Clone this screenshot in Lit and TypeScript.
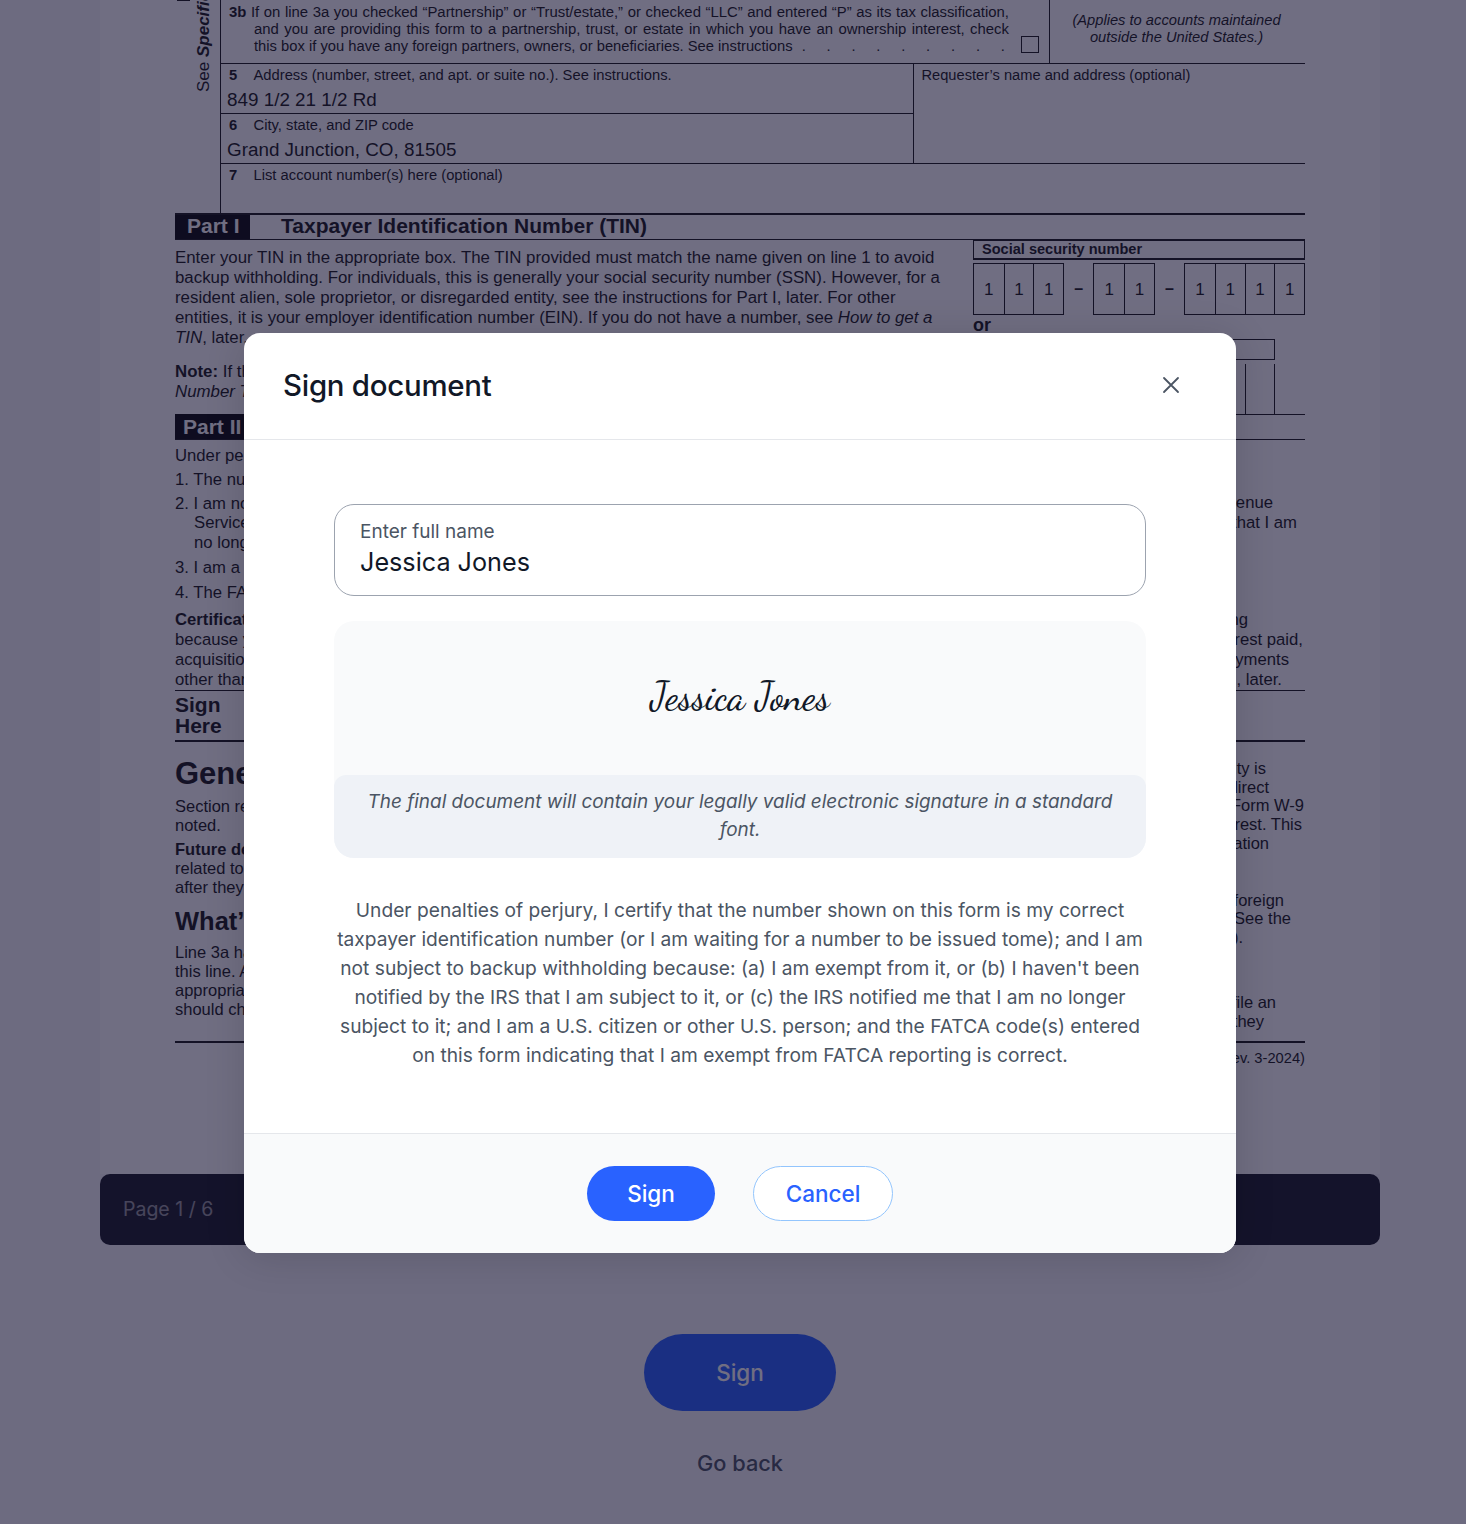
import { LitElement, html, css } from "lit";
import { customElement } from "lit/decorators.js";

type Row = { y: number; t?: unknown; k?: string; end?: number };

const certLeft: Row[] = [
  { y: 455, t: "Under penalties of" },
  { y: 479, t: "1. The number" },
  { y: 503, t: "2. I am not" },
  { y: 522, t: "Service", k: "ind" },
  { y: 542, t: "no longer", k: "ind" },
  { y: 567, t: "3. I am a U.S." },
  { y: 592, t: "4. The FATCA" },
  { y: 619, t: html`<b>Certification</b>` },
  { y: 639, t: "because you" },
  { y: 659, t: "acquisition or" },
  { y: 679, t: "other than" },
];
const certRight: Row[] = [
  { y: 502, t: "Revenue", end: 1273 },
  { y: 522, t: "that I am", end: 1297 },
  { y: 619, t: "withholding", end: 1248 },
  { y: 639, t: "interest paid,", end: 1303 },
  { y: 659, t: "payments", end: 1289 },
  { y: 679, t: "Part II, later.", end: 1282 },
];
const lowerLeft: Row[] = [
  { y: 774, t: "General", k: "h1" },
  { y: 806, t: "Section references" },
  { y: 825, t: "noted." },
  { y: 849, t: html`<b>Future developments</b>` },
  { y: 868, t: "related to Form" },
  { y: 887, t: "after they were" },
  { y: 921, t: "What’s New", k: "h2" },
  { y: 952, t: "Line 3a has" },
  { y: 971, t: "this line. An" },
  { y: 990, t: "appropriate" },
  { y: 1009, t: "should check" },
];
const lowerRight: Row[] = [
  { y: 768, t: "entity is", end: 1266 },
  { y: 787, t: "indirect", end: 1269 },
  { y: 805, t: "Form W-9", end: 1304 },
  { y: 824, t: "interest. This", end: 1302 },
  { y: 843, t: "information", end: 1269 },
  { y: 900, t: "to a foreign", end: 1284 },
  { y: 918, t: "See the", end: 1291 },
  { y: 937, t: "(W-8).", end: 1243 },
  { y: 1002, t: "to file an", end: 1276 },
  { y: 1021, t: "if they", end: 1264 },
];

@customElement("app-root")
export class AppRoot extends LitElement {
  static styles = css`
    :host { display: block; width: 1466px; height: 1524px; overflow: hidden; position: relative; background: #f8f8fa; font-family: Inter, sans-serif; }
    .stage { height: 1524px; display: flex; flex-direction: column; align-items: center; padding-left: 14px; box-sizing: border-box; }
    .viewer { width: 1280px; height: 1174px; background: #fff; box-sizing: border-box; padding: 0 75px; overflow: hidden; font-family: "Liberation Sans", Arial, sans-serif; color: #1a1a1a; flex: none; }

    .upper { display: grid; grid-template-columns: 45px 1fr; height: 213px; }
    .side { display: flex; align-items: flex-start; }
    .tick { flex: none; width: 13px; height: 1px; margin-left: 2px; background: #1a1a1a; }
    .side span { display: block; writing-mode: vertical-rl; transform: rotate(180deg); font-size: 17px; line-height: 18px; margin-left: 5px; width: 18px; height: 92px; white-space: nowrap; }
    .side b { font-style: italic; font-weight: 700; }
    .main { border-left: 1px solid #1a1a1a; display: flex; flex-direction: column; font-size: 14.75px; }
    .l3 { height: 63px; display: grid; grid-template-columns: 828px 1fr; border-bottom: 1px solid #1a1a1a; }
    .l3a { padding: 4px 40px 0 8px; font-size: 14.9px; line-height: 17px; position: relative; }
    .just { text-align: justify; text-align-last: justify; }
    .ind { padding-left: 25px; }
    .dots-line { display: flex; white-space: nowrap; font-size: 14.75px; }
    .dots { flex: 1; display: flex; justify-content: space-between; margin: 0 4px 0 9px; }
    .check { position: absolute; right: 10px; top: 36px; width: 18px; height: 17px; border: 1px solid #1a1a1a; box-sizing: border-box; }
    .l3b { border-left: 1px solid #1a1a1a; text-align: center; font-style: italic; font-size: 14.7px; line-height: 17px; padding: 12px 2px 0 0; }
    .mid { display: grid; grid-template-columns: 693px 1fr; height: 100px; box-sizing: border-box; border-bottom: 1px solid #1a1a1a; }
    .mid-left { border-right: 1px solid #1a1a1a; display: flex; flex-direction: column; }
    .cell { height: 49px; box-sizing: border-box; padding: 3px 0 0 8px; line-height: 16px; }
    .cell + .cell { border-top: 1px solid #1a1a1a; height: 50px; }
    .num { font-weight: 700; display: inline-block; width: 24.5px; }
    .val { font-size: 18.85px; line-height: 21px; margin: 6px 0 0 -2px; }
    .req { padding: 3px 0 0 7.5px; line-height: 16px; font-size: 14.65px; }
    .l7 { padding: 3px 0 0 8px; line-height: 16px; }

    .part { display: flex; align-items: stretch; height: 27px; border-top: 2px solid #1a1a1a; border-bottom: 1px solid #1a1a1a; box-sizing: border-box; }
    .tag { background: #0a0a0a; color: #fff; font-weight: 700; font-size: 21px; line-height: 22px; width: 75px; box-sizing: border-box; flex: none; white-space: nowrap; }
    .part .tag { padding-left: 12px; }
    .part .ttl { font-weight: 700; font-size: 21px; line-height: 22px; padding-left: 31px; }
    .tin { display: grid; grid-template-columns: 798px 1fr; height: 175px; }
    .tin p { margin: 0; font-size: 16.85px; line-height: 20px; padding-top: 8px; white-space: nowrap; }
    .tin p + p { padding-top: 14px; }
    .ssn-h { border-style: solid; border-color: #1a1a1a; border-width: 2px 1px; height: 21px; box-sizing: border-box; font-size: 14.55px; font-weight: 700; line-height: 17px; padding-left: 8px; margin-top: -1px; }
    .boxes { display: flex; justify-content: space-between; margin-top: 3px; }
    .grp { display: flex; border: 1px solid #1a1a1a; height: 52px; box-sizing: border-box; }
    .grp i { font-style: normal; width: 29.7px; box-sizing: border-box; border-left: 1px solid #1a1a1a; text-align: center; font-size: 17px; line-height: 51px; }
    .grp i:first-child { border-left: 0; }
    .dash { font-weight: 700; font-size: 16px; line-height: 51px; width: 28px; text-align: center; }
    .or { font-weight: 700; font-size: 18px; line-height: 20px; margin-top: 0; }
    .ein-h { width: 302px; height: 21px; border: 1px solid #1a1a1a; box-sizing: border-box; margin-top: 4px; }
    .ein { display: flex; justify-content: flex-end; height: 51px; margin-top: 4px; padding-right: 30px; box-sizing: border-box; border-bottom: 1px solid #1a1a1a; }
    .ein i { width: 30px; border-left: 1px solid #1a1a1a; box-sizing: border-box; }
    .ein i:last-child { border-right: 1px solid #1a1a1a; }

    .part2 { margin-top: -1px; height: 26px; box-sizing: border-box; border-bottom: 1px solid #1a1a1a; display: flex; }
    .part2 .tag { padding-left: 8px; line-height: 25px; }

    .pair { display: grid; grid-template-columns: 600px 1fr; }
    .col { display: flex; flex-direction: column; overflow: hidden; min-width: 0; }
    .cert { font-size: 16.7px; height: 250px; box-sizing: border-box; }
    .cert .row { line-height: 22px; }
    .row { line-height: 20px; white-space: nowrap; flex: none; }
    .row.ind { padding-left: 19px; }
    .right .row { text-align: right; }
    .row.h1 { font-size: 31px; font-weight: 700; }
    .row.h2 { font-size: 25.5px; font-weight: 700; }
    .sign { font-weight: 700; font-size: 21px; line-height: 21px; height: 52px; border-top: 1px solid #1a1a1a; border-bottom: 2px solid #1a1a1a; box-sizing: border-box; padding-top: 3px; }
    .lower { font-size: 16.5px; height: 299px; }
    .foot { border-top: 2px solid #1a1a1a; font-size: 14.7px; text-align: right; line-height: 31px; }

    .bar { width: 1280px; height: 71px; background: #1a1c26; border-radius: 10px; flex: none; color: #fff; display: flex; align-items: center; padding: 0 0 1px 23px; box-sizing: border-box; font-size: 19.5px; }
    .bar span { opacity: .55; }
    .under-sign { margin-top: 89px; width: 192px; height: 77px; border-radius: 39px; background: #2962ff; color: #fff; display: flex; align-items: center; justify-content: center; font-size: 22.5px; font-weight: 500; flex: none; }
    .back { margin-top: 38px; font-size: 21.8px; font-weight: 500; color: #4b5563; line-height: 28px; }

    .scrim { position: absolute; inset: 0; background: rgba(16,14,47,.6); }
    .modal { position: absolute; left: 244px; top: 333px; width: 992px; height: 920px; background: #fff; border-radius: 16px; overflow: hidden; box-shadow: 0 4px 40px rgba(0,0,0,.14); display: flex; flex-direction: column; }
    .head { height: 107px; box-sizing: border-box; border-bottom: 1px solid #e5e7eb; display: flex; align-items: center; justify-content: space-between; padding: 0 56px 2px 39px; flex: none; }
    .head h2 { margin: 0; font-weight: 500; font-size: 29.4px; color: #111827; letter-spacing: -.25px; }
    .x { width: 18px; height: 18px; display: block; }
    .body { flex: 1; padding: 64px 90px 0; display: flex; flex-direction: column; }
    .field { height: 92px; box-sizing: border-box; border: 1px solid #9ca3af; border-radius: 20px; padding: 14px 25px 0; }
    .field label { display: block; font-size: 19px; line-height: 26px; color: #4b5563; }
    .field .v { font-size: 25.2px; line-height: 34px; color: #111827; }
    .preview { margin-top: 25px; border-radius: 20px; overflow: hidden; background: #f9fafb; display: flex; flex-direction: column; }
    .script { height: 154px; padding-bottom: 4px; box-sizing: border-box; display: flex; align-items: center; justify-content: center; font-family: "Dancing Script", cursive; font-weight: 500; font-size: 39px; color: #111827; }
    .note { background: #eff2f7; padding: 13px 14px 14px; text-align: center; font-style: italic; font-size: 18.95px; line-height: 28px; color: #4b5563; border-radius: 12px 12px 0 0; }
    .legal { margin: 38px 0 0; text-align: center; font-size: 19.2px; line-height: 29px; color: #4b5563; }
    .acts { height: 120px; box-sizing: border-box; border-top: 1px solid #e5e7eb; background: #f9fafb; display: flex; align-items: center; justify-content: center; gap: 38px; flex: none; }
    .btn { height: 55px; border-radius: 28px; display: flex; align-items: center; justify-content: center; font-size: 22.5px; font-weight: 500; box-sizing: border-box; }
    .btn.p { width: 128px; background: #2962ff; color: #fff; }
    .btn.s { width: 140px; background: #fff; color: #2962ff; border: 1px solid #93c5fd; }
  `;

  /** Lines of a form column: each row is as tall as the distance to the next baseline. */
  private col(rows: Row[], startY: number, bottomY: number, right = false) {
    return html`<div class="col ${right ? "right" : ""}" style="padding-top:${rows[0].y - 10 - startY}px">
      ${rows.map((r, i) => {
        const next = i + 1 < rows.length ? rows[i + 1].y - r.y : bottomY - r.y + 10;
        const pad = r.end ? `padding-right:${1305 - r.end}px;` : "";
        return html`<div class="row ${r.k ?? ""}" style="${pad}height:${next}px">${r.t}</div>`;
      })}
    </div>`;
  }

  render() {
    const dots = Array.from({ length: 9 }, () => html`<span>.</span>`);
    return html`
      <div class="stage">
        <div class="viewer">
          <div class="upper">
            <div class="side"><div class="tick"></div><span>See <b>Specific</b></span></div>
            <div class="main">
              <div class="l3">
                <div class="l3a">
                  <div class="just"><b>3b</b> If on line 3a you checked “Partnership” or “Trust/estate,” or checked “LLC” and entered “P” as its tax classification,</div>
                  <div class="just ind">and you are providing this form to a partnership, trust, or estate in which you have an ownership interest, check</div>
                  <div class="ind dots-line"><span>this box if you have any foreign partners, owners, or beneficiaries. See instructions</span><span class="dots">${dots}</span></div>
                  <span class="check"></span>
                </div>
                <div class="l3b">(Applies to accounts maintained<br />outside the United States.)</div>
              </div>
              <div class="mid">
                <div class="mid-left">
                  <div class="cell"><span class="num">5</span>Address (number, street, and apt. or suite no.). See instructions.<div class="val">849 1/2 21 1/2 Rd</div></div>
                  <div class="cell"><span class="num">6</span>City, state, and ZIP code<div class="val">Grand Junction, CO, 81505</div></div>
                </div>
                <div class="req">Requester’s name and address (optional)</div>
              </div>
              <div class="l7"><span class="num">7</span>List account number(s) here (optional)</div>
            </div>
          </div>
          <div class="part"><div class="tag">Part I</div><div class="ttl">Taxpayer Identification Number (TIN)</div></div>
          <div class="tin">
            <div>
              <p>Enter your TIN in the appropriate box. The TIN provided must match the name given on line 1 to avoid<br />backup withholding. For individuals, this is generally your social security number (SSN). However, for a<br />resident alien, sole proprietor, or disregarded entity, see the instructions for Part I, later. For other<br />entities, it is your employer identification number (EIN). If you do not have a number, see <i>How to get a<br />TIN</i>, later.</p>
              <p><b>Note:</b> If the<br /><i>Number To</i></p>
            </div>
            <div>
              <div class="ssn-h">Social security number</div>
              <div class="boxes">
                <div class="grp"><i>1</i><i>1</i><i>1</i></div><div class="dash">–</div>
                <div class="grp"><i>1</i><i>1</i></div><div class="dash">–</div>
                <div class="grp"><i>1</i><i>1</i><i>1</i><i>1</i></div>
              </div>
              <div class="or">or</div>
              <div class="ein-h"></div>
              <div class="ein"><i></i><i></i></div>
            </div>
          </div>
          <div class="part2"><div class="tag">Part II</div></div>
          <div class="pair cert">
            ${this.col(certLeft, 440, 680)}
            ${this.col(certRight, 440, 680, true)}
          </div>
          <div class="sign">Sign<br />Here</div>
          <div class="pair lower">
            ${this.col(lowerLeft, 742, 1041)}
            ${this.col(lowerRight, 742, 1041, true)}
          </div>
          <div class="foot">(Rev. 3-2024)</div>
        </div>
        <div class="bar"><span>Page 1 / 6</span></div>
        <div class="under-sign">Sign</div>
        <div class="back">Go back</div>
      </div>
      <div class="scrim"></div>
      <div class="modal">
        <div class="head">
          <h2>Sign document</h2>
          <svg class="x" viewBox="0 0 18 18" fill="none" stroke="#4b5563" stroke-width="1.8" stroke-linecap="round"><path d="M2 2l14 14M16 2L2 16" /></svg>
        </div>
        <div class="body">
          <div class="field"><label>Enter full name</label><div class="v">Jessica Jones</div></div>
          <div class="preview">
            <div class="script">Jessica Jones</div>
            <div class="note">The final document will contain your legally valid electronic signature in a standard font.</div>
          </div>
          <p class="legal">Under penalties of perjury, I certify that the number shown on this form is my correct taxpayer identification number (or I am waiting for a number to be issued tome); and I am not subject to backup withholding because: (a) I am exempt from it, or (b) I haven't been notified by the IRS that I am subject to it, or (c) the IRS notified me that I am no longer subject to it; and I am a U.S. citizen or other U.S. person; and the FATCA code(s) entered on this form indicating that I am exempt from FATCA reporting is correct.</p>
        </div>
        <div class="acts"><div class="btn p">Sign</div><div class="btn s">Cancel</div></div>
      </div>
    `;
  }
}
